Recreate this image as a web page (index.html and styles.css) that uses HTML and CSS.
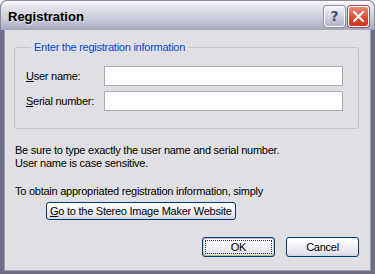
FILE: index.html
```html
<!DOCTYPE html>
<html lang="en">
<head>
    <meta charset="UTF-8">
    <title>Registration</title>
    <link rel="stylesheet" href="styles.css">
</head>
<body>
    <div class="window">
        <div class="title-bar">
            <span class="title">Registration</span>
            <div class="caption-buttons">
                <button class="cap-btn help">?</button>
                <button class="cap-btn close">
                    <svg width="13" height="13" viewBox="0 0 13 13"><path d="M2 2 L11 11 M11 2 L2 11" stroke="#fff" stroke-width="2.2" stroke-linecap="round"/></svg>
                </button>
            </div>
        </div>
        <div class="client">
            <fieldset class="group">
                <legend>Enter the registration information</legend>
                <div class="field-row">
                    <label><u>U</u>ser name:</label>
                    <input type="text">
                </div>
                <div class="field-row">
                    <label><u>S</u>erial number:</label>
                    <input type="text">
                </div>
            </fieldset>
            <p class="note">Be sure to type exactly the user name and serial number.<br>User name is case sensitive.</p>
            <p class="note">To obtain appropriated registration information, simply</p>
            <button class="btn website"><u>G</u>o to the Stereo Image Maker Website</button>
            <div class="actions">
                <button class="btn default"><span>OK</span></button>
                <button class="btn">Cancel</button>
            </div>
        </div>
    </div>
</body>
</html>
```

FILE: styles.css
```css
body {
    margin: 0;
    padding: 0;
    background: #fff;
    font-family: 'Liberation Sans', Arial, sans-serif;
    font-size: 11px;
    letter-spacing: -0.25px;
}
.window {
    width: 375px;
    height: 274px;
    box-sizing: border-box;
    display: flex;
    flex-direction: column;
    background: #6f6e88;
    border-radius: 7px 7px 0 0;
    overflow: hidden;
}
.title-bar {
    height: 30px;
    flex: none;
    display: flex;
    align-items: center;
    justify-content: space-between;
    padding: 0 5px 0 7px;
    box-sizing: border-box;
    background: linear-gradient(to bottom, #ffffff 0%, #ececf2 12%, #dcdde7 30%, #cccddb 60%, #b6b7ca 85%, #a3a4b8 100%);
    border: 1px solid #8a8aa0;
    border-bottom: none;
    border-radius: 7px 7px 0 0;
}
.title {
    font-family: 'Liberation Sans', Arial, sans-serif;
    font-weight: bold;
    font-size: 13px;
    letter-spacing: 0;
    color: #000;
    margin-top: 2px;
    text-shadow: 1px 1px 0 #d8d8e2;
}
.caption-buttons {
    display: flex;
    gap: 3px;
    margin-top: 1px;
}
.cap-btn {
    width: 21px;
    height: 21px;
    padding: 0;
    border: 1px solid #fff;
    border-radius: 3px;
    display: flex;
    align-items: center;
    justify-content: center;
    box-shadow: 0 0 0 1px #8e8ea6;
}
.help {
    background: linear-gradient(to bottom, #f2f2f8, #b3b3c9);
    color: #4a4a66;
    font-family: 'DejaVu Sans', sans-serif;
    font-weight: bold;
    font-size: 14px;
}
.close {
    background: linear-gradient(to bottom, #eb8a74, #d5482e 60%, #c43a22);
    box-shadow: 0 0 0 1px #9a5050;
}
.client {
    flex: 1;
    margin: 0 4px 3px 4px;
    background: #e0dfe3;
    border: 1px solid #9d9cb0;
    border-top: none;
    padding: 11px 11px 0 9px;
    display: flex;
    flex-direction: column;
    align-items: flex-start;
}
.group {
    align-self: stretch;
    margin: 0;
    border: 1px solid #c9c5cc;
    border-radius: 3px;
    padding: 8px 15px 17px 11px;
}
legend {
    color: #0046d5;
    padding: 0 3px;
    margin-left: 5px;
}
.field-row {
    display: flex;
    align-items: center;
    margin-top: 5px;
}
.field-row label {
    width: 78px;
    flex: none;
    color: #000;
}
.field-row input {
    flex: 1;
    height: 20px;
    box-sizing: border-box;
    border: 1px solid #a5acb2;
    background: #fff;
    padding: 0 3px;
    margin: 0;
    font-size: 11px;
}
.note {
    margin: 15px 0 0 1px;
    line-height: 13px;
    color: #000;
}
.btn {
    font-family: 'Liberation Sans', Arial, sans-serif;
    font-size: 11px;
    letter-spacing: -0.25px;
    color: #000;
    border: 1px solid #003c74;
    border-radius: 3px;
    background: linear-gradient(to bottom, #ffffff 0%, #f4f3f9 40%, #e6e4ee 80%, #d6d3e2 100%);
    padding: 0;
    margin: 0;
}
.website {
    margin: 4px 0 0 32px;
    height: 18px;
    padding: 0 3px;
}
.actions {
    align-self: stretch;
    display: flex;
    justify-content: flex-end;
    gap: 11px;
    margin-top: 17px;
}
.actions .btn {
    width: 73px;
    height: 20px;
}
.default {
    box-shadow: inset 0 1px 0 #ceb8c8, inset 0 -1px 0 #bcc48a, inset 1px 0 0 #ccc, inset -1px 0 0 #ccc;
    padding: 2px;
}
.default span {
    display: flex;
    align-items: center;
    justify-content: center;
    height: 100%;
    box-sizing: border-box;
    border: 1px dotted #333;
}
```
